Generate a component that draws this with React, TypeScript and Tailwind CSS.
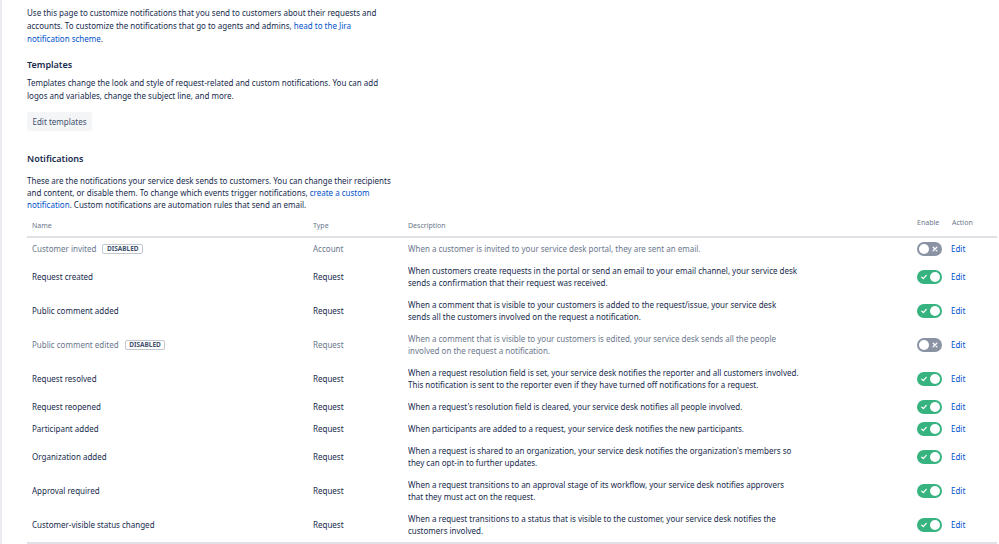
import React from "react";

type Row = { name: string; type: string; desc: string[]; disabled?: boolean };

const rows: Row[] = [
  { name: "Customer invited", type: "Account", desc: ["When a customer is invited to your service desk portal, they are sent an email."], disabled: true },
  { name: "Request created", type: "Request", desc: ["When customers create requests in the portal or send an email to your email channel, your service desk", "sends a confirmation that their request was received."] },
  { name: "Public comment added", type: "Request", desc: ["When a comment that is visible to your customers is added to the request/issue, your service desk", "sends all the customers involved on the request a notification."] },
  { name: "Public comment edited", type: "Request", desc: ["When a comment that is visible to your customers is edited, your service desk sends all the people", "involved on the request a notification."], disabled: true },
  { name: "Request resolved", type: "Request", desc: ["When a request resolution field is set, your service desk notifies the reporter and all customers involved.", "This notification is sent to the reporter even if they have turned off notifications for a request."] },
  { name: "Request reopened", type: "Request", desc: ["When a request's resolution field is cleared, your service desk notifies all people involved."] },
  { name: "Participant added", type: "Request", desc: ["When participants are added to a request, your service desk notifies the new participants."] },
  { name: "Organization added", type: "Request", desc: ["When a request is shared to an organization, your service desk notifies the organization's members so", "they can opt-in to further updates."] },
  { name: "Approval required", type: "Request", desc: ["When a request transitions to an approval stage of its workflow, your service desk notifies approvers", "that they must act on the request."] },
  { name: "Customer-visible status changed", type: "Request", desc: ["When a request transitions to a status that is visible to the customer, your service desk notifies the", "customers involved."] },
];

function Toggle({ on }: { on: boolean }) {
  if (on) {
    return (
      <div className="relative h-[14px] w-[25px] rounded-full bg-[#36b37e]">
        <svg className="absolute left-[4px] top-[4px]" width="6" height="6" viewBox="0 0 6 6">
          <path d="M0.8 3.2 L2.4 4.6 L5.2 1.4" fill="none" stroke="white" strokeWidth="1.3" strokeLinecap="round" strokeLinejoin="round" />
        </svg>
        <div className="absolute right-[2px] top-[2px] h-[10px] w-[10px] rounded-full bg-white" />
      </div>
    );
  }
  return (
    <div className="relative h-[14px] w-[25px] rounded-full bg-[#8993a4]">
      <div className="absolute left-[2px] top-[2px] h-[10px] w-[10px] rounded-full bg-white" />
      <svg className="absolute right-[4px] top-[4px]" width="6" height="6" viewBox="0 0 6 6">
        <path d="M1.2 1.2 L4.8 4.8 M4.8 1.2 L1.2 4.8" fill="none" stroke="white" strokeWidth="1.3" strokeLinecap="round" />
      </svg>
    </div>
  );
}

export default function App() {
  return (
    <div
      className="min-h-[544px] w-[999px] border-l-2 border-[#ebecf0] bg-white text-[#172b4d]"
      style={{ fontFamily: '"Noto Sans", "Open Sans", sans-serif' }}
    >
      <div className="pl-[25px] pr-[2px] pt-[6px]">
        <p className="whitespace-nowrap text-[8px] leading-[13px]">
          Use this page to customize notifications that you send to customers about their requests and
          <br />
          accounts. To customize the notifications that go to agents and admins,{" "}
          <span className="text-[#0052cc]">head to the Jira</span>
          <br />
          <span className="text-[#0052cc]">notification scheme</span>.
        </p>

        <h2 className="mt-[13px] text-[9px] font-semibold leading-[14px]">Templates</h2>
        <p className="mt-[4px] whitespace-nowrap text-[8px] leading-[13px]">
          Templates change the look and style of request-related and custom notifications. You can add
          <br />
          logos and variables, change the subject line, and more.
        </p>
        <div className="mt-[10px] flex h-[19px] w-[65px] items-center justify-center rounded-[3px] bg-[#f4f5f7] text-[8px] text-[#42526e]">
          Edit templates
        </div>

        <h2 className="mt-[21px] text-[9px] font-semibold leading-[14px]">Notifications</h2>
        <p className="mt-[9px] whitespace-nowrap text-[8px] leading-[12px]">
          These are the notifications your service desk sends to customers. You can change their recipients
          <br />
          and content, or disable them. To change which events trigger notifications,{" "}
          <span className="text-[#0052cc]">create a custom</span>
          <br />
          <span className="text-[#0052cc]">notification</span>. Custom notifications are automation rules that send an email.
        </p>

        <div className="mt-[9px] w-[970px]">
          <div className="grid grid-cols-[281px_95px_509px_35px_50px] border-b-2 border-[#dfe1e6] pb-[4px] text-[7px] leading-[12px] text-[#6b778c]">
            <div className="pl-[5px]">Name</div>
            <div className="pl-[5px]">Type</div>
            <div className="pl-[5px]">Description</div>
            <div className="-mt-[3px] pl-[5px]">Enable</div>
            <div className="-mt-[3px] pl-[5px]">Action</div>
          </div>
          <div className="border-b-2 border-[#dfe1e6]">
            {rows.map((r) => (
              <div
                key={r.name}
                className={`grid grid-cols-[281px_95px_509px_35px_50px] items-center text-[8px] leading-[12px] ${r.desc.length > 1 ? "h-[34px]" : "h-[22px]"}`}
              >
                <div className={`flex items-center pl-[5px] ${r.disabled ? "text-[#6b778c]" : "text-[#172b4d]"}`}>
                  <span>{r.name}</span>
                  {r.disabled && (
                    <span className="ml-[6px] rounded-[2px] border border-[#c1c7d0] px-[3.5px] text-[6.5px] font-bold leading-[8px] text-[#42526e]">
                      DISABLED
                    </span>
                  )}
                </div>
                <div className={`pl-[5px] ${r.disabled ? "text-[#6b778c]" : "text-[#172b4d]"}`}>{r.type}</div>
                <div className={`pl-[5px] ${r.disabled ? "text-[#6b778c]" : "text-[#172b4d]"}`}>
                  {r.desc.map((l, i) => (
                    <div key={i} className="whitespace-nowrap">{l}</div>
                  ))}
                </div>
                <div className="pl-[5px]">
                  <Toggle on={!r.disabled} />
                </div>
                <div className="pl-[4px] text-[#0052cc]">Edit</div>
              </div>
            ))}
          </div>
        </div>
      </div>
    </div>
  );
}
